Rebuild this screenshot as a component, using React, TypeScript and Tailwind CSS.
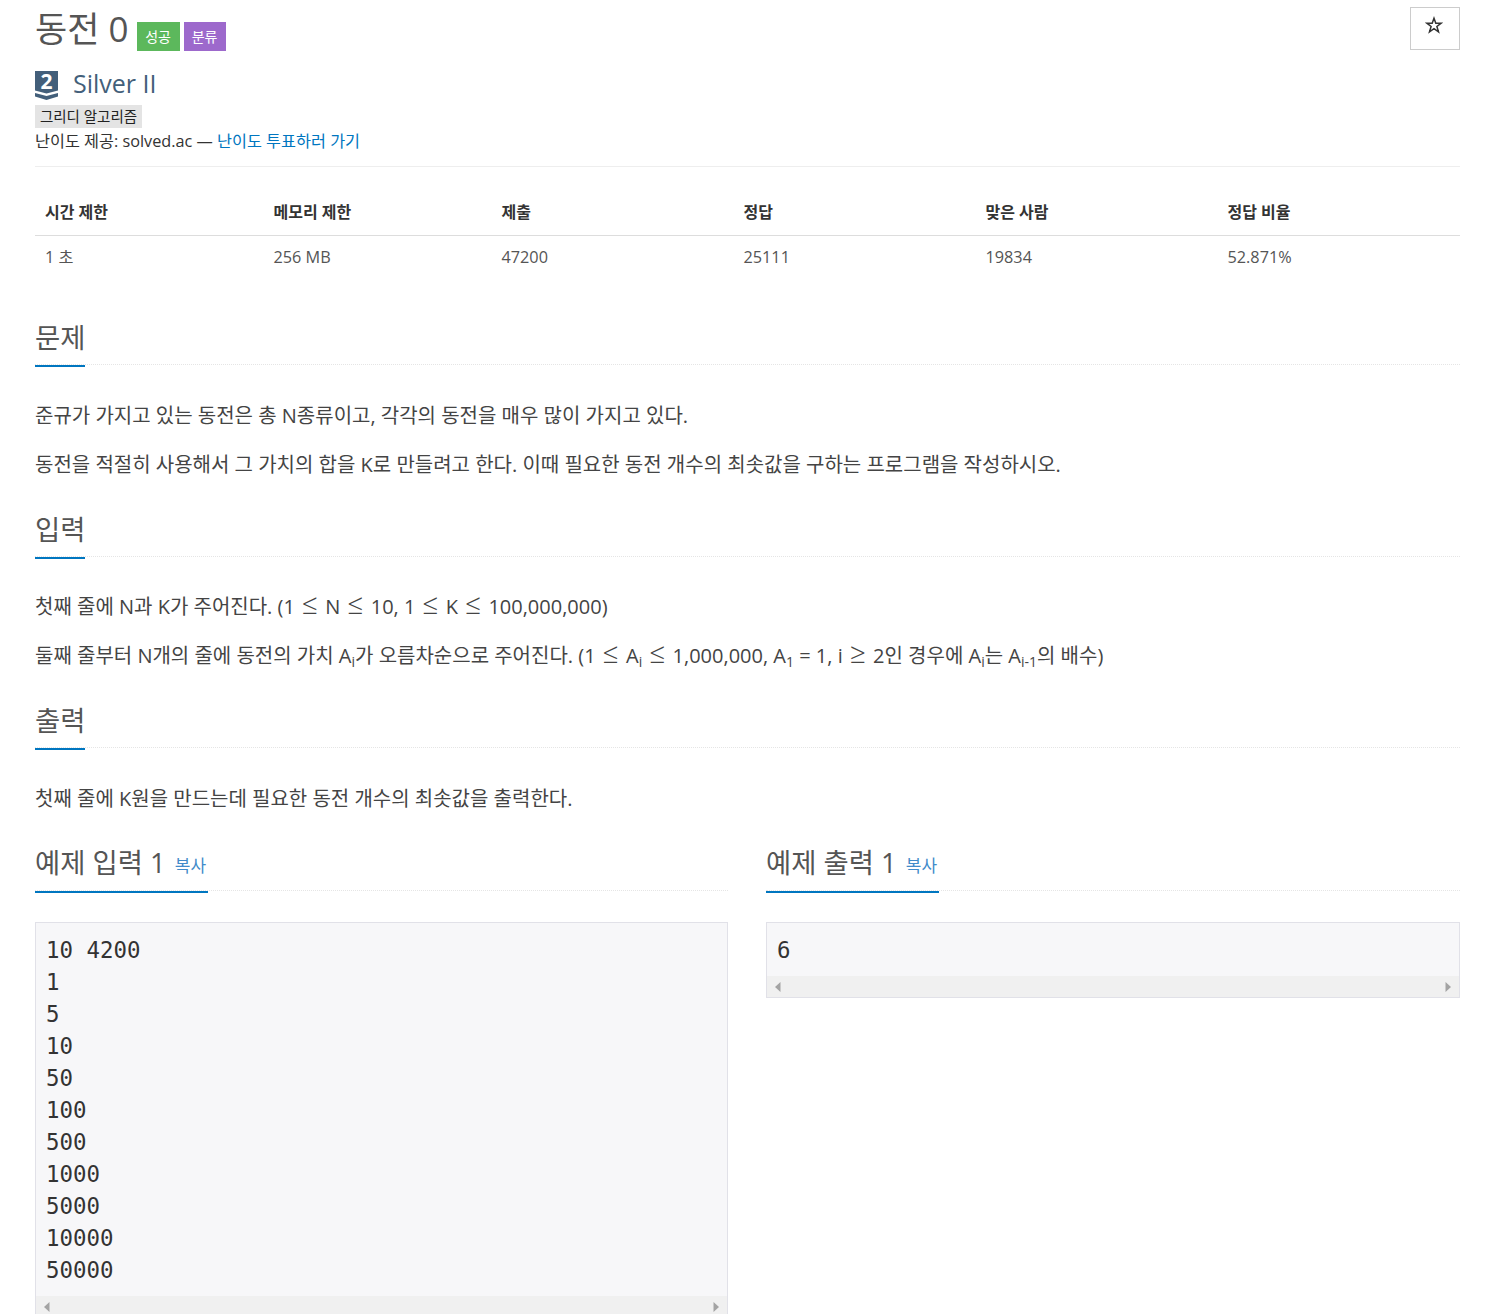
import type { ReactNode } from "react";

const sans = "font-['Open_Sans','Noto_Sans_CJK_KR',sans-serif]";
const mono = "font-['DejaVu_Sans_Mono','Noto_Sans_CJK_KR',monospace]";

function Headline({ children, className = "", pb = "pb-[7px]" }: { children: ReactNode; className?: string; pb?: string }) {
  return (
    <div className={"border-b border-dotted border-[#e5e5e5] " + className}>
      <h2 className={pb + " -mb-[3px] inline-block border-b-[2px] border-[#0076c0] text-[27.4px] leading-[40px] font-normal text-[#555]"}>
        {children}
      </h2>
    </div>
  );
}

function Scrollbar() {
  return (
    <div className="flex h-[21px] items-center justify-between bg-[#f0f0f0] px-[8px]">
      <svg width="6" height="10" viewBox="0 0 6 10"><path d="M5.5 0 L0 5 L5.5 10 Z" fill="#a3a3a3" /></svg>
      <svg width="6" height="10" viewBox="0 0 6 10"><path d="M0.5 0 L6 5 L0.5 10 Z" fill="#a3a3a3" /></svg>
    </div>
  );
}

function Sample({ title, lines }: { title: string; lines: string[] }) {
  return (
    <div className="min-w-0">
      <Headline pb="pb-[4px]">
        {title} <span className="relative -top-[1px] ml-[2px] mr-[2px] text-[17px] text-[#428bca]">복사</span>
      </Headline>
      <div className="mt-[31px] border border-[#e1e1e8] bg-[#f7f7f9]">
        <pre className={mono + " px-[10px] pt-[11px] pb-[10px] text-[22.4px] leading-[32px] text-[#333]"}>
          {lines.join("\n")}
        </pre>
        <Scrollbar />
      </div>
    </div>
  );
}

function Sub({ children }: { children: ReactNode }) {
  return <sub className="text-[14px] leading-none">{children}</sub>;
}

// the math signs are drawn wider than the body font
function Op({ children }: { children: ReactNode }) {
  return <span className="mx-[2px] text-[28px] leading-[0] font-light">{children}</span>;
}

const stats = [
  ["시간 제한", "1 초", "w-[228.5px]"],
  ["메모리 제한", "256 MB", "w-[228px]"],
  ["제출", "47200", "w-[242px]"],
  ["정답", "25111", "w-[242px]"],
  ["맞은 사람", "19834", "w-[242px]"],
  ["정답 비율", "52.871%", "w-[242.5px]"],
];

export default function App() {
  return (
    <div className={sans + " h-[1314px] overflow-hidden bg-white pl-[35px] pr-[28px] text-[#333]"}>
      <div className="flex items-start justify-between">
        <div className="flex items-center pt-[7px]">
          <h1 className="text-[35px] leading-[44px] font-normal text-[#555]">동전 0</h1>
          <span className="mt-[15px] ml-[8px] flex h-[29px] w-[43px] items-center justify-center bg-[#5cb85c] text-[14px] text-white">성공</span>
          <span className="mt-[15px] ml-[4px] flex h-[29px] w-[42px] items-center justify-center bg-[#9d69cc] text-[14px] text-white">분류</span>
        </div>
        <button className="mt-[7px] flex h-[43px] w-[50px] items-center justify-center border border-[#ccc] bg-white">
          <svg width="18" height="18" viewBox="0 0 18 18" className="-mt-[7px] -ml-[2px]">
            <path d="M9 2.2 L10.8 7.2 L16.2 7.2 L11.9 10.5 L13.5 15.8 L9 12.6 L4.5 15.8 L6.1 10.5 L1.8 7.2 L7.2 7.2 Z" fill="none" stroke="#333" strokeWidth="1.5" />
          </svg>
        </button>
      </div>

      <div className="mt-[20px] flex h-[29px] items-center">
        <div className="relative h-[29px] w-[23px]">
          <svg width="23" height="29" viewBox="0 0 23 29">
            <path d="M0 0 H23 V19.5 L11.5 22.5 L0 19.5 Z" fill="#435f7a" />
            <path d="M0 22 L11.5 25 L23 22 V25.5 L11.5 29 L0 25.5 Z" fill="#435f7a" />
          </svg>
          <span className="absolute inset-x-0 -top-[1px] text-center text-[21px] leading-[22px] font-bold text-white">2</span>
        </div>
        <span className="ml-[15px] -mt-[6px] text-[25px] leading-[30px] text-[#435f7a]">Silver II</span>
      </div>

      <div className="mt-[5px] flex">
        <span className="flex h-[23px] w-[107px] items-center justify-center bg-[#e4e4e4] text-[14.5px] text-[#222]">그리디 알고리즘</span>
      </div>
      <p className="mt-[1px] text-[16.25px] leading-[24px]">
        난이도 제공: solved.ac — <span className="text-[#0076c0]">난이도 투표하러 가기</span>
      </p>

      <div className="mt-[13px] border-t border-[#eee]" />

      <table className="mt-[24px] w-[1425px] table-fixed border-collapse text-[16.25px] text-[#555]">
        <thead>
          <tr className="border-b border-[#ddd]">
            {stats.map(([label, , w]) => (
              <th key={label} className={w + " h-[44px] px-[10px] pb-[2px] text-left text-[16px] font-bold text-[#333]"}>{label}</th>
            ))}
          </tr>
        </thead>
        <tbody>
          <tr>
            {stats.map(([label, value]) => (
              <td key={label} className="h-[43px] px-[10px] text-left">{value}</td>
            ))}
          </tr>
        </tbody>
      </table>

      <Headline className="mt-[40px]">문제</Headline>
      <div className="mt-[35px] text-[20px] leading-[32px] text-[#444]">
        <p>준규가 가지고 있는 동전은 총 N종류이고, 각각의 동전을 매우 많이 가지고 있다.</p>
        <p className="mt-[17px]">동전을 적절히 사용해서 그 가치의 합을 K로 만들려고 한다. 이때 필요한 동전 개수의 최솟값을 구하는 프로그램을 작성하시오.</p>
      </div>

      <Headline className="mt-[29px]">입력</Headline>
      <div className="mt-[34px] text-[20px] leading-[32px] text-[#444]">
        <p>첫째 줄에 N과 K가 주어진다. (1 <Op>≤</Op> N <Op>≤</Op> 10, 1 <Op>≤</Op> K <Op>≤</Op> 100,000,000)</p>
        <p className="mt-[17px]">
          둘째 줄부터 N개의 줄에 동전의 가치 A<Sub>i</Sub>가 오름차순으로 주어진다. (1 <Op>≤</Op> A<Sub>i</Sub> <Op>≤</Op> 1,000,000, A<Sub>1</Sub> = 1, i <Op>≥</Op> 2인 경우에 A<Sub>i</Sub>는 A<Sub>i-1</Sub>의 배수)
        </p>
      </div>

      <Headline className="mt-[29px]">출력</Headline>
      <p className="mt-[35px] text-[20px] leading-[32px] text-[#444]">첫째 줄에 K원을 만드는데 필요한 동전 개수의 최솟값을 출력한다.</p>

      <div className="mt-[28px] grid w-[1425px] grid-cols-[693px_694px] items-start gap-x-[38px]">
        <Sample title="예제 입력 1" lines={["10 4200", "1", "5", "10", "50", "100", "500", "1000", "5000", "10000", "50000"]} />
        <Sample title="예제 출력 1" lines={["6"]} />
      </div>
    </div>
  );
}
